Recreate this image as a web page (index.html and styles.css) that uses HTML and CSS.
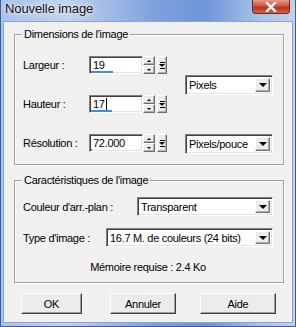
FILE: index.html
```html
<!DOCTYPE html>
<html>
<head>
<meta charset="utf-8">
<link rel="stylesheet" href="styles.css">
</head>
<body>
<div class="window">
  <div class="titlebar">
    <span class="title">Nouvelle image</span>
    <div class="close">
      <svg width="14" height="10" viewBox="0 0 14 10"><path d="M3 1 L11 9 M11 1 L3 9" stroke="#fff" stroke-width="2.4" stroke-linecap="square"/></svg>
    </div>
  </div>
  <div class="client">
    <div class="group g1">
      <span class="legend">Dimensions de l'image</span>
      <div class="g1-body">
        <div class="fields">
          <div class="row">
            <span class="lbl">Largeur :</span>
            <div class="edit"><span class="val">19</span><i class="bar" style="width:22px"></i></div>
            <div class="spin"><b class="sbtn"><i class="tri-up"></i></b><b class="sbtn"><i class="tri-down"></i></b></div>
            <div class="maxbtn"><i class="mline"></i><i class="tri-down"></i><i class="mline"></i></div>
          </div>
          <div class="row">
            <span class="lbl">Hauteur :</span>
            <div class="edit"><span class="val">17</span><i class="caret"></i><i class="bar" style="width:21px"></i></div>
            <div class="spin"><b class="sbtn"><i class="tri-up"></i></b><b class="sbtn"><i class="tri-down"></i></b></div>
            <div class="maxbtn"><i class="mline"></i><i class="tri-down"></i><i class="mline"></i></div>
          </div>
          <div class="row">
            <span class="lbl">Résolution :</span>
            <div class="edit"><span class="val">72.000</span><i class="bar" style="width:1px"></i></div>
            <div class="spin"><b class="sbtn"><i class="tri-up"></i></b><b class="sbtn"><i class="tri-down"></i></b></div>
            <div class="maxbtn"><i class="mline"></i><i class="tri-down"></i><i class="mline"></i></div>
          </div>
        </div>
        <div class="units">
          <div class="select sel-px"><span class="stext">Pixels</span><span class="dbtn"><i class="tri-big"></i></span></div>
          <div class="select sel-ppi"><span class="stext">Pixels/pouce</span><span class="dbtn"><i class="tri-big"></i></span></div>
        </div>
      </div>
    </div>
    <div class="group g2">
      <span class="legend">Caractéristiques de l'image</span>
      <div class="g2-body">
        <div class="row2">
          <span class="lbl2 w1">Couleur d'arr.-plan :</span>
          <div class="select sel-wide"><span class="stext">Transparent</span><span class="dbtn"><i class="tri-big"></i></span></div>
        </div>
        <div class="row2">
          <span class="lbl2 w2">Type d'image :</span>
          <div class="select sel-wide"><span class="stext">16.7 M. de couleurs (24 bits)</span><span class="dbtn"><i class="tri-big"></i></span></div>
        </div>
        <div class="mem">Mémoire requise : 2.4 Ko</div>
      </div>
    </div>
    <div class="buttons">
      <div class="btn b-ok">OK</div>
      <div class="btn b-cancel">Annuler</div>
      <div class="btn b-help">Aide</div>
    </div>
  </div>
</div>
</body>
</html>
```
FILE: styles.css
```css
* { box-sizing: border-box; }
html, body { margin: 0; padding: 0; }
body {
  width: 296px;
  height: 327px;
  overflow: hidden;
  font-family: "Liberation Sans", Arial, sans-serif;
  font-size: 11px;
  letter-spacing: -0.3px;
  color: #000;
}
.window {
  width: 296px;
  height: 327px;
  display: flex;
  flex-direction: column;
  background: linear-gradient(to right, #a9c2ea 0%, #c0d3f0 22%, #7ea1dd 52%, #6f96d8 70%, #a9c2e9 88%, #bfd2ef 100%);
  border: 1px solid #3c5e98;
  border-top: none;
  padding: 0 2px 3px 2px;
}
.titlebar {
  height: 21px;
  display: flex;
  justify-content: space-between;
  align-items: flex-start;
  padding-left: 2px;
  flex: none;
}
.title {
  font-size: 13px;
  letter-spacing: -0.1px;
  line-height: 16px;
  margin-top: 1px;
  color: #1c1208;
  text-shadow: 0 0 6px #eef3fb, 0 0 3px #eef3fb;
}
.close {
  width: 38px;
  height: 14px;
  margin-right: 3px;
  border: 1px solid #6b2a22;
  border-top: none;
  border-radius: 0 0 4px 4px;
  background: linear-gradient(to bottom, #e79a86 0%, #d0553d 45%, #b8341e 60%, #d2674d 100%);
  display: flex;
  align-items: center;
  justify-content: center;
}
.client {
  flex: 1;
  background: #f0f0f0;
  border: 1px solid #8aa4cf;
  padding: 12px 8px 0 10px;
}
.group {
  position: relative;
  border: 1px solid #a0a0a0;
  box-shadow: inset 1px 1px 0 #fff, 1px 1px 0 #fff;
}
.legend {
  position: absolute;
  top: -7px;
  left: 7px;
  background: #f0f0f0;
  padding: 0 2px;
  line-height: 13px;
}
.g1 { height: 131px; }
.g1-body {
  display: flex;
  padding: 21px 0 0 8px;
}
.fields {
  display: flex;
  flex-direction: column;
  gap: 21px;
}
.row {
  display: flex;
  align-items: center;
  height: 18px;
}
.lbl { width: 66px; }
.edit {
  position: relative;
  width: 54px;
  height: 18px;
  background: #fff;
  border: 1px solid;
  border-color: #808080 #fff #fff #808080;
  box-shadow: inset 1px 1px 0 #404040, inset -1px -1px 0 #e3e3e3;
  padding: 2px 0 0 3px;
  line-height: 12px;
  display: flex;
  align-items: flex-start;
}
.caret {
  width: 1px;
  height: 12px;
  background: #000;
  margin-left: 1px;
}
.bar {
  position: absolute;
  left: 1px;
  bottom: 0px;
  height: 2px;
  background: #3b8fe6;
}
.spin {
  width: 12px;
  height: 18px;
  display: flex;
  flex-direction: column;
}
.sbtn, .maxbtn, .dbtn {
  background: #ececec;
  border: 1px solid;
  border-color: #fff #707070 #707070 #fff;
  box-shadow: inset -1px -1px 0 #b0b0b0;
  display: flex;
  align-items: center;
  justify-content: center;
}
.sbtn { height: 9px; }
.tri-up {
  width: 0; height: 0;
  border-left: 2px solid transparent;
  border-right: 2px solid transparent;
  border-bottom: 2px solid #000;
}
.tri-down {
  width: 0; height: 0;
  border-left: 3px solid transparent;
  border-right: 3px solid transparent;
  border-top: 3px solid #000;
}
.sbtn .tri-down {
  border-left-width: 2px;
  border-right-width: 2px;
  border-top-width: 2px;
}
.maxbtn {
  width: 10px;
  height: 18px;
  margin-left: 2px;
  flex-direction: column;
  gap: 1px;
}
.mline { width: 5px; height: 1px; background: #000; }
.units {
  margin-left: 18px;
  display: flex;
  flex-direction: column;
  padding-top: 19px;
  gap: 39px;
}
.select {
  height: 20px;
  background: #fff;
  border: 1px solid;
  border-color: #808080 #fff #fff #808080;
  box-shadow: inset 1px 1px 0 #404040, inset -1px -1px 0 #e3e3e3;
  display: flex;
  align-items: stretch;
  padding: 2px;
}
.sel-px, .sel-ppi { width: 88px; }
.stext {
  flex: 1;
  padding-left: 1px;
  line-height: 14px;
  white-space: nowrap;
  overflow: hidden;
}
.dbtn { width: 15px; flex: none; }
.tri-big {
  width: 0; height: 0;
  border-left: 4px solid transparent;
  border-right: 4px solid transparent;
  border-top: 4px solid #000;
}
.g2 {
  margin-top: 15px;
  height: 103px;
}
.g2-body {
  padding: 16px 10px 0 8px;
  display: flex;
  flex-direction: column;
}
.row2 {
  display: flex;
  align-items: center;
  margin-bottom: 12px;
}
.row2 .select { height: 19px; flex: 1; }
.lbl2.w1 { width: 114px; }
.lbl2.w2 { width: 83px; }
.mem {
  text-align: center;
  line-height: 13px;
  margin-top: 2px;
}
.buttons {
  display: flex;
  margin-top: 10px;
  padding-left: 7px;
}
.btn {
  height: 21px;
  display: flex;
  align-items: center;
  justify-content: center;
  background: #ececec;
  border: 1px solid;
  border-color: #fff #404040 #404040 #fff;
  box-shadow: inset -1px -1px 0 #a0a0a0;
}
.b-ok { width: 61px; }
.b-cancel { width: 66px; margin-left: 28px; }
.b-help { width: 76px; margin-left: 24px; }
```
